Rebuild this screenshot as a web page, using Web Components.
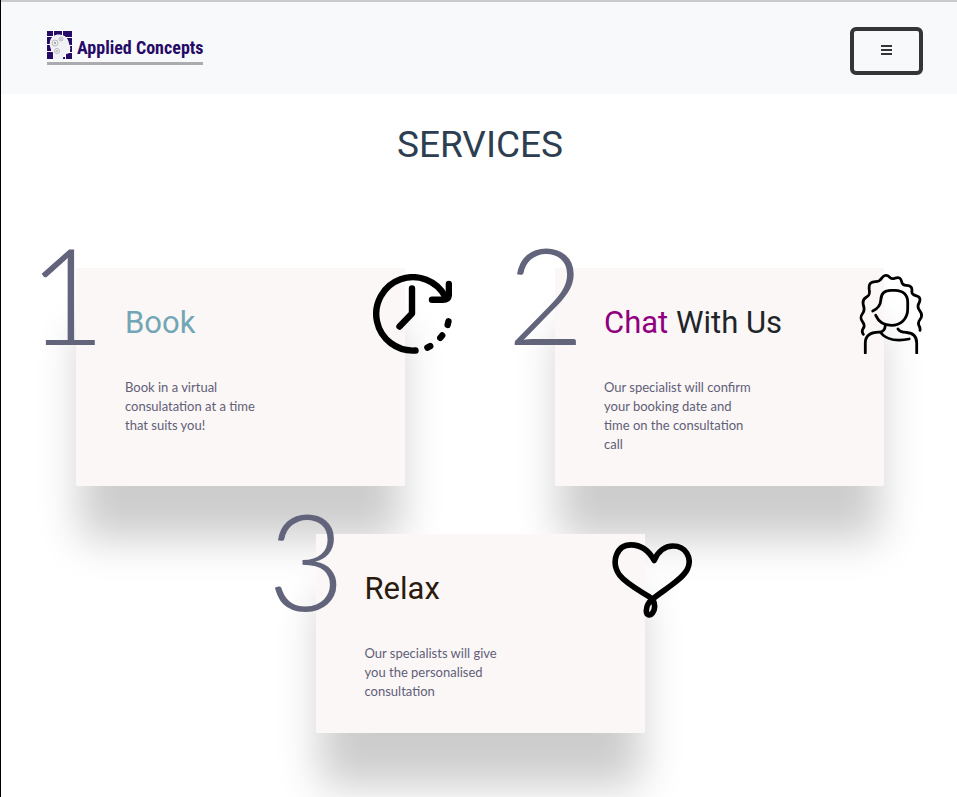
<!DOCTYPE html>
<html lang="en">
<head>
<meta charset="utf-8">
<meta name="viewport" content="width=device-width, initial-scale=1">
<title>Applied Concepts – Services</title>
<style>
  html { background: #fff; }
  body { margin: 0; min-height: 100vh; box-sizing: border-box; border-left: 1px solid #000; overflow: hidden; font-family: Lato, sans-serif; color: #5f6078; }
</style>
</head>
<body>
<services-page></services-page>

<script>
const define = (name, html) => {
  const template = document.createElement('template');
  template.innerHTML = html;
  customElements.define(name, class extends HTMLElement {
    constructor() {
      super();
      this.attachShadow({ mode: 'open' }).append(template.content.cloneNode(true));
    }
  });
};

define('brand-logo', `
  <style>
    :host { display: block; }
    a { display: grid; grid-template-columns: 26px auto; column-gap: 4px; align-items: end; color: #260a67; text-decoration: none; }
    .mark { width: 26px; height: 30px; display: block; }
    .name { font: 700 18px/24px "Roboto Condensed", "Liberation Sans", sans-serif; white-space: nowrap; }
    .rule { grid-column: 1 / -1; height: 3px; margin-top: 2px; background: #acacb0; }
  </style>
  <a href="#">
    <svg class="mark" viewBox="0 0 26 30" aria-hidden="true">
      <path fill="#260a67" d="M0 1h6v5H0zM7 1h8v6H7zM16 1h9v6h-9zM0 7h6v7H0zM20 8h5v7h-5zM0 15h4v6H0zM23 16h2v6h-2zM0 22h6v7H0zM16 27h2v2h-2zM19 23h6v6h-6z"/>
      <path fill="#f1f1f4" d="M6 6C10 3.5 16 4 19 7c2.500 2.500 2.500 5 3.500 8l1 4-2 1.500v3l-4 1-2 4.500H7c0-3 0-5-1.500-7C2 17 1.500 10 6 6z"/>
      <g fill="none" stroke="#b9b9c2" stroke-width="1"><circle cx="8" cy="13" r="3"/><circle cx="14" cy="9" r="2"/><circle cx="10" cy="21" r="2.500"/></g>
      <g fill="#8e8e99"><circle cx="8" cy="13" r="1"/><circle cx="14" cy="9" r=".7"/><circle cx="10" cy="21" r=".8"/></g>
    </svg>
    <span class="name">Applied Concepts</span>
    <span class="rule"></span>
  </a>`);

define('menu-button', `
  <style>
    :host { display: block; }
    button { display: grid; place-items: center; width: 73px; height: 48px; padding: 0; border: 4px solid #333536; border-radius: 6px; background: #f8f9fb; color: #333536; }
    svg { display: block; width: 11px; height: 12px; }
  </style>
  <button type="button" aria-label="Menu">
    <svg viewBox="0 0 11 12" aria-hidden="true"><path fill="currentColor" d="M0 0h11v2H0zM0 4h11v2H0zM0 8h11v2H0z"/></svg>
  </button>`);

define('site-header', `
  <style>
    :host { display: flex; justify-content: space-between; align-items: center; padding: 25px 34px 19px 46px; border-top: 2px solid #cacaca; background: #f8f9fb; }
    brand-logo { align-self: flex-start; padding-top: 3px; }
  </style>
  <brand-logo></brand-logo>
  <menu-button></menu-button>`);

define('step-icon-clock', `
  <style>:host, svg { display: block; width: 80px; height: 80px; }</style>
  <svg viewBox="0 0 80 80" fill="none" stroke="#000" stroke-width="6.4" stroke-linecap="round" stroke-linejoin="round" aria-hidden="true">
    <path d="M43.5 76.5A36.7 36.7 0 1 1 73.500 23"/>
    <path d="M76.9 10V20Q76.9 25.8 71 25.8H60"/>
    <path d="M40 14.5V39.5L27.5 52.5"/>
    <path d="M76.5 47.3L75.6 51M70.2 61.5L68.3 63.8M58.2 72.1L55.4 73.6"/>
  </svg>`);

define('step-icon-person', `
  <style>:host, svg { display: block; width: 80px; height: 80px; }</style>
  <svg viewBox="0 0 80 80" fill="none" stroke="#000" stroke-width="2.8" stroke-linecap="round" stroke-linejoin="round" aria-hidden="true">
    <path d="M12.3 60.3C10.8 58 11 56 12.4 54.2C13.8 52 13.5 50.5 11.8 48.2C9 44.5 9.3 42.5 11.6 39.5C13.6 37 13.6 35.5 12.6 32C11.2 27.5 12 25 15.2 23.2C18.4 21.5 19 20 18.3 16C17.5 10.5 19 7.8 24.5 7.6C28.5 7.5 29.3 6.2 30.8 4C33 .8 36.3 .6 38.5 3.2C40 5 41.5 5.1 44 4.2C48.3 2.8 50 4.3 50.6 7.5C51.1 10.3 52.4 11.3 55.3 11.4C60 11.6 61.3 13.7 60.9 17C60.6 19.7 61.5 20.8 64.8 21.6C69.5 22.8 69.8 25.6 67.8 29.5C66.3 32.3 66.6 34 68.7 36.7C71.5 40.3 71.3 42.6 69 45.5C66.9 48.2 66.8 49.6 68.2 52C69 53.4 69.3 54.6 69 56.3"/>
    <path d="M21.7 37C27 34.5 29.6 31.5 29.8 26C30 19.5 34 16.3 40 16.3H44C52 16.3 56.7 21 56.7 28V35C56.7 45 49.5 51.3 40.5 51.3C32.5 51.3 27.5 47.5 24.7 41.3"/>
    <path d="M34.2 51.7C34 56.5 31.5 58 28 58.1C19 58.2 14.3 62 14.3 69V79"/>
    <path d="M29.5 58.5C35 65.5 46 67.5 58.2 65"/>
    <path d="M47 55C49.2 58.3 52 58.3 55.5 58.5C62 59 65.7 62.5 65.7 69V79"/>
  </svg>`);

define('step-icon-heart', `
  <style>:host, svg { display: block; width: 80px; height: 80px; }</style>
  <svg viewBox="0 0 80 80" fill="none" stroke="#000" stroke-width="5.6" stroke-linecap="round" stroke-linejoin="round" aria-hidden="true">
    <path d="M40.7 59C28 50.5 15 44.5 7.500 35C-1.500 22 4.500 4.900 19 4.900C29 4.900 37 11 42.2 20.500C45.500 11.500 53 6 61 6C73.500 6 80.500 17.500 75.500 29C70.500 39.500 53 49 40.7 59C36.500 62.2 34.500 66 34.3 70.500C34.2 75.500 38 76.3 40.500 73C43.3 69.3 43.8 65.500 40.7 59Z"/>
  </svg>`);

define('step-card', `
  <style>
    :host { display: block; position: relative; box-sizing: border-box; width: min(329px, 100%); padding: 36px 49px 32px; background: #fbf7f6; box-shadow: 0 57px 40px -4px rgba(0, 0, 0, .2); }
    h2 { margin: 0 0 37px; font: 400 31px/37px Roboto, sans-serif; color: var(--title, #212529); }
    p { margin: 0; max-width: 150px; font-size: 13px; line-height: 19px; color: #5f6078; }
    .number { position: absolute; left: -48px; top: -54px; font-size: 134px; font-weight: 300; line-height: 160px; color: #62647b; }
    .icon { position: absolute; right: -47px; top: 6px; }
  </style>
  <span class="number"><slot name="number"></slot></span>
  <span class="icon"><slot name="icon"></slot></span>
  <h2><slot name="title"></slot></h2>
  <p><slot></slot></p>`);

define('services-page', `
  <style>
    :host { display: block; }
    main { padding: 32px 0 65px 2px; }
    h1 { margin: 0 0 104px; text-align: center; font: 400 37px/38px Roboto, sans-serif; color: #2c3e50; }
    .steps { display: flex; flex-wrap: wrap; justify-content: center; gap: 48px 150px; }
    .book { --title: #72a6b5; }
    .relax { --title: #2b1b0e; }
    .accent { color: #8f0080; }
  </style>
  <site-header></site-header>
  <main>
    <h1>SERVICES</h1>
    <div class="steps">
      <step-card class="book"><span slot="number">1</span><step-icon-clock slot="icon"></step-icon-clock><span slot="title">Book</span>Book in a virtual consulatation at a time that suits you!</step-card>
      <step-card><span slot="number">2</span><step-icon-person slot="icon"></step-icon-person><span slot="title"><span class="accent">Chat</span> With Us</span>Our specialist will confirm your booking date and time on the consultation call</step-card>
      <step-card class="relax"><span slot="number">3</span><step-icon-heart slot="icon"></step-icon-heart><span slot="title">Relax</span>Our specialists will give you the personalised consultation</step-card>
    </div>
  </main>`);
</script>
</body>
</html>
